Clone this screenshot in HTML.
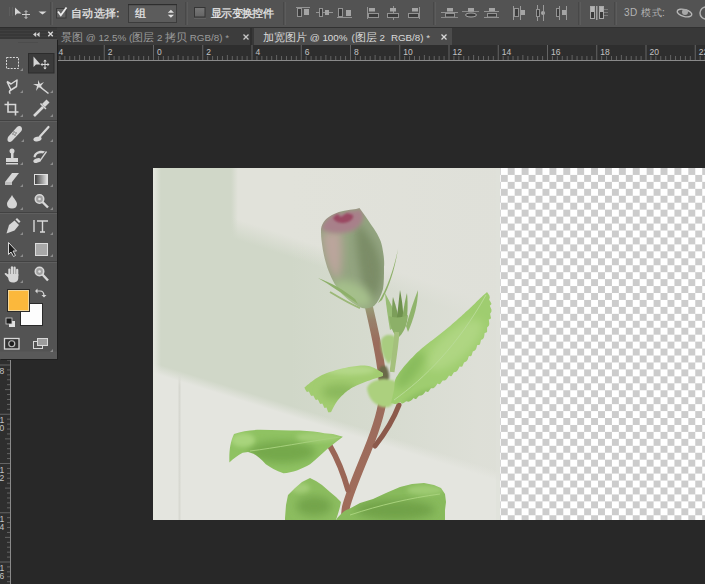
<!DOCTYPE html>
<html><head><meta charset="utf-8">
<style>
*{margin:0;padding:0;box-sizing:border-box}
html,body{width:705px;height:584px;overflow:hidden;background:#282828;font-family:"Liberation Sans",sans-serif;position:relative}
.abs{position:absolute}
#opt{left:0;top:0;width:705px;height:28px;background:#535353;border-bottom:1px solid #333}
.txt{font-size:11px;line-height:14px;color:#e8e8e8;white-space:nowrap;-webkit-text-stroke:0.25px #e8e8e8}
#tabs{left:57px;top:27px;width:648px;height:18px;background:#383838;border-top:1px solid #313131}
#tab1{left:0;top:0;width:195px;height:17px;background:#3c3c3c;color:#9c9c9c;font-size:10.5px;line-height:12px;white-space:nowrap;overflow:hidden;border-right:2px solid #2f2f2f}
.x{font-size:12px}
#tabs span{font-size:9.8px}
#tabs b.c{font-weight:normal;font-size:11px}
#tab2{left:197px;top:0;width:198px;height:17px;background:#4c4c4c;color:#dadada;font-size:10.5px;line-height:12px;white-space:nowrap;overflow:hidden}
#hruler{left:57px;top:45px;width:648px;height:16px;background:#2e2e2e}
#vruler{left:0;top:45px;width:11px;height:539px;background:#2e2e2e}
#panelhdr{left:0;top:27px;width:57px;height:12px;background:#383838}
#panel{left:0;top:39px;width:57px;height:320px;background:linear-gradient(#535353 0,#535353 312px,#595959 313px,#595959 100%);box-shadow:1px 1px 0 #1f1f1f}
#photo{left:153px;top:168px;width:347px;height:352px;background:#dfe1d9;overflow:hidden}
#checker{left:500px;top:168px;width:205px;height:352px;
 background-color:#fff;
 background-image:conic-gradient(#cccccc 0 25%,#fff 0 50%,#cccccc 0 75%,#fff 0);
 background-size:13.9px 13.9px;background-position:0.8px 0}
</style></head><body>
<div id="opt" class="abs">
 <svg class="abs" style="left:0;top:0" width="705" height="27">
  <g stroke="#484848" stroke-width="1"><line x1="50.5" y1="2" x2="50.5" y2="25"/><line x1="185.5" y1="2" x2="185.5" y2="25"/><line x1="283.5" y1="2" x2="283.5" y2="25"/><line x1="433.5" y1="2" x2="433.5" y2="25"/><line x1="578.5" y1="2" x2="578.5" y2="25"/><line x1="614.5" y1="2" x2="614.5" y2="25"/></g>
  <g stroke="#5c5c5c" stroke-width="1"><line x1="52.5" y1="2" x2="52.5" y2="25"/><line x1="187.5" y1="2" x2="187.5" y2="25"/><line x1="285.5" y1="2" x2="285.5" y2="25"/><line x1="435.5" y1="2" x2="435.5" y2="25"/><line x1="580.5" y1="2" x2="580.5" y2="25"/><line x1="616.5" y1="2" x2="616.5" y2="25"/></g>
  <path d="M9.5,7 V16 M12.5,7 V16" stroke="#5e5e5e" stroke-width="1"/>
  <!-- move icon -->
  <path d="M15,7.5 L15,15.5 L17,13.5 L21.5,13.5 Z" fill="#d4d4d4"/>
  <path d="M26,11 V18.5 M22,14.5 H30" stroke="#cfcfcf" stroke-width="1"/>
  <path d="M24.5,12 L26,10.5 L27.5,12 M24.5,17 L26,18.5 L27.5,17" stroke="#cfcfcf" stroke-width="0.8" fill="none"/>
  <path d="M38.5,11.5 H46.5 L42.5,14.5 Z" fill="#d8d8d8"/>
  <!-- checkbox 1 -->
  <rect x="56.5" y="8.5" width="9.5" height="9.5" fill="#626262" stroke="#3a3a3a"/>
  <path d="M58,11.5 L60.8,15.2 L66.5,7.5" stroke="#ececec" stroke-width="1.8" fill="none"/>
  <!-- dropdown -->
  <rect x="128.5" y="4.5" width="48" height="18" fill="#5c5c5c" stroke="#3c3c3c"/><rect x="128" y="4" width="49" height="1.2" fill="#2e2e2e"/>
  <path d="M167.8,12.8 L170.9,9.8 L174,12.8 Z M167.8,14.8 L170.9,17.8 L174,14.8 Z" fill="#e0e0e0"/>
  <!-- checkbox 2 -->
  <defs><linearGradient id="cbg" x1="0" y1="0" x2="0" y2="1"><stop offset="0" stop-color="#787878"/><stop offset="1" stop-color="#646464"/></linearGradient></defs><rect x="194.5" y="7.5" width="10.5" height="9.5" fill="url(#cbg)" stroke="#353535"/><rect x="194" y="18" width="12" height="1" fill="#626262"/>
  <g id="aligns"><path d="M296,7.5 L310,7.5" stroke="#939393" stroke-width="1"/><rect x="297.5" y="8.5" width="4" height="8" fill="#3c3c3c" stroke="#939393" stroke-width="1"/><rect x="304" y="9" width="5" height="6" fill="#a4a4a4"/><path d="M316,12.5 L333,12.5" stroke="#939393" stroke-width="1"/><rect x="319.5" y="8.5" width="3" height="8" fill="#3c3c3c" stroke="#939393" stroke-width="1"/><rect x="325" y="10" width="4" height="5" fill="#a4a4a4"/><path d="M337,17.5 L352,17.5" stroke="#939393" stroke-width="1"/><rect x="338.5" y="8.5" width="4" height="8" fill="#3c3c3c" stroke="#939393" stroke-width="1"/><rect x="346" y="10" width="5" height="6" fill="#a4a4a4"/><path d="M367.5,7 L367.5,19" stroke="#939393" stroke-width="1"/><rect x="369" y="8" width="6" height="3.5" fill="#a4a4a4"/><rect x="368.5" y="13.5" width="10" height="4" fill="#3c3c3c" stroke="#939393" stroke-width="1"/><path d="M393.5,6 L393.5,20" stroke="#939393" stroke-width="1"/><rect x="390" y="8" width="6" height="3.5" fill="#a4a4a4"/><rect x="387.5" y="13.5" width="11" height="4" fill="#3c3c3c" stroke="#939393" stroke-width="1"/><path d="M419.5,7 L419.5,19" stroke="#939393" stroke-width="1"/><rect x="412" y="8" width="6" height="3.5" fill="#a4a4a4"/><rect x="408.5" y="13.5" width="10" height="4" fill="#3c3c3c" stroke="#939393" stroke-width="1"/><path d="M441,12.5 L458,12.5" stroke="#939393" stroke-width="1"/><rect x="447" y="8" width="6" height="3.5" fill="#a4a4a4"/><rect x="445.5" y="13.5" width="9" height="3.5" fill="#3c3c3c" stroke="#939393" stroke-width="1"/><path d="M441,17.5 L458,17.5" stroke="#8a8a8a" stroke-width="1"/><path d="M462,11.5 L479,11.5" stroke="#8a8a8a" stroke-width="1"/><rect x="468" y="8" width="6" height="3.5" fill="#a4a4a4"/><ellipse cx="471" cy="15" rx="5.5" ry="2" fill="#3c3c3c" stroke="#a8a8a8"/><path d="M484,11.5 L499,11.5" stroke="#939393" stroke-width="1"/><rect x="489" y="8" width="6" height="3" fill="#a4a4a4"/><rect x="487.5" y="13.5" width="9" height="3.5" fill="#3c3c3c" stroke="#939393" stroke-width="1"/><path d="M484,17.5 L499,17.5" stroke="#939393" stroke-width="1"/><path d="M513.5,6 L513.5,20" stroke="#9a9a9a" stroke-width="1"/><rect x="514.5" y="8.5" width="4" height="8" fill="#3c3c3c" stroke="#939393" stroke-width="1"/><rect x="521" y="10" width="4" height="5" fill="#a4a4a4"/><path d="M520.5,6 L520.5,20" stroke="#9a9a9a" stroke-width="1"/><path d="M537.5,5 L537.5,21" stroke="#9a9a9a" stroke-width="1"/><rect x="536.5" y="9.5" width="3" height="7" fill="#3c3c3c" stroke="#939393" stroke-width="1"/><circle cx="543" cy="13" r="2" fill="#a8a8a8"/><path d="M543.5,5 L543.5,21" stroke="#9a9a9a" stroke-width="1"/><path d="M559.5,6 L559.5,20" stroke="#9a9a9a" stroke-width="1"/><rect x="556.5" y="8.5" width="3" height="8" fill="#3c3c3c" stroke="#939393" stroke-width="1"/><rect x="562" y="10" width="4" height="5" fill="#a4a4a4"/><path d="M566.5,6 L566.5,20" stroke="#9a9a9a" stroke-width="1"/>
   <rect x="590.5" y="6.5" width="4" height="12" fill="#3a3a3a" stroke="#a8a8a8"/><rect x="591" y="7" width="3" height="5" fill="#b4b4b4"/><rect x="596" y="6" width="1.5" height="14" fill="#a0a0a0"/><rect x="599.5" y="6.5" width="4" height="12" fill="#3a3a3a" stroke="#a8a8a8"/><rect x="600" y="7" width="3" height="5" fill="#b4b4b4"/><path d="M604,9.5 H608 M604,12.5 H608 M604,15.5 H608" stroke="#7a7a7a"/>
  </g>
  <!-- 3d orbit -->
  <ellipse cx="684.5" cy="13" rx="7.5" ry="3.5" fill="none" stroke="#b8b8b8" stroke-width="1.4" transform="rotate(15 684.5 13)"/>
  <circle cx="685" cy="12" r="3" fill="#a8a8a8"/>
  <circle cx="706" cy="13" r="6" fill="none" stroke="#b0b0b0" stroke-width="1.5"/>
 </svg>
 <div class="abs txt" style="left:71px;top:6px;letter-spacing:0.3px">自动选择:</div>
 <div class="abs txt" style="left:135px;top:6px">组</div>
 <div class="abs txt" style="left:211px;top:6px;letter-spacing:-0.7px">显示变换控件</div>
 <div class="abs" style="left:624px;top:6px;font-size:10px;line-height:14px;color:#b4b4b4;white-space:nowrap;letter-spacing:0.5px">3D 模式:</div>
</div>
<div id="tabs" class="abs">
  <div id="tab1" class="abs"><span class="abs" style="left:4px;top:3px"><b class="c">景图</b> @ 12.5% (<b class="c">图层</b> 2 <b class="c">拷贝</b> RGB/8) *</span><svg class="abs" style="left:185px;top:5px" width="8" height="8"><path d="M1.5,1.5 L6.5,6.5 M6.5,1.5 L1.5,6.5" stroke="#c8c8c8" stroke-width="1.3"/></svg></div>
  <div id="tab2" class="abs"><span class="abs" style="left:9px;top:3px"><b class="c">加宽图片</b> @ 100%<i style="font-style:normal;margin-left:4px">(</i><b class="c">图层</b> 2<i style="font-style:normal;margin-left:6px">RGB/8)</i> *</span><svg class="abs" style="left:186px;top:5px" width="8" height="8"><path d="M1.5,1.5 L6.5,6.5 M6.5,1.5 L1.5,6.5" stroke="#d8d8d8" stroke-width="1.3"/></svg></div>
</div>
<div id="hruler" class="abs"><svg width="648" height="16" style="position:absolute;left:0;top:0">
<path d="M2.92,11V15M7.85,11V15M12.78,11V15M17.70,11V15M22.62,10V15M27.55,11V15M32.48,11V15M37.40,11V15M42.33,11V15M47.25,0V15M52.18,11V15M57.10,11V15M62.03,11V15M66.95,11V15M71.88,10V15M76.80,11V15M81.72,11V15M86.65,11V15M91.57,11V15M96.50,0V15M101.43,11V15M106.35,11V15M111.28,11V15M116.20,11V15M121.12,10V15M126.05,11V15M130.97,11V15M135.90,11V15M140.82,11V15M145.75,0V15M150.68,11V15M155.60,11V15M160.52,11V15M165.45,11V15M170.38,10V15M175.30,11V15M180.22,11V15M185.15,11V15M190.07,11V15M195.00,0V15M199.93,11V15M204.85,11V15M209.77,11V15M214.70,11V15M219.62,10V15M224.55,11V15M229.48,11V15M234.40,11V15M239.32,11V15M244.25,0V15M249.17,11V15M254.10,11V15M259.02,11V15M263.95,11V15M268.88,10V15M273.80,11V15M278.73,11V15M283.65,11V15M288.57,11V15M293.50,0V15M298.42,11V15M303.35,11V15M308.27,11V15M313.20,11V15M318.12,10V15M323.05,11V15M327.98,11V15M332.90,11V15M337.82,11V15M342.75,0V15M347.67,11V15M352.60,11V15M357.52,11V15M362.45,11V15M367.38,10V15M372.30,11V15M377.22,11V15M382.15,11V15M387.07,11V15M392.00,0V15M396.93,11V15M401.85,11V15M406.77,11V15M411.70,11V15M416.62,10V15M421.55,11V15M426.47,11V15M431.40,11V15M436.32,11V15M441.25,0V15M446.18,11V15M451.10,11V15M456.02,11V15M460.95,11V15M465.88,10V15M470.80,11V15M475.72,11V15M480.65,11V15M485.58,11V15M490.50,0V15M495.42,11V15M500.35,11V15M505.27,11V15M510.20,11V15M515.12,10V15M520.05,11V15M524.97,11V15M529.90,11V15M534.83,11V15M539.75,0V15M544.67,11V15M549.60,11V15M554.52,11V15M559.45,11V15M564.38,10V15M569.30,11V15M574.22,11V15M579.15,11V15M584.08,11V15M589.00,0V15M593.92,11V15M598.85,11V15M603.77,11V15M608.70,11V15M613.62,10V15M618.55,11V15M623.48,11V15M628.40,11V15M633.32,11V15M638.25,0V15M643.17,11V15M648.10,11V15" stroke="#646464" stroke-width="1" fill="none"/>
<rect x="0" y="15" width="648" height="1" fill="#8a8a8a"/>
<g font-family="Liberation Sans" font-size="8.5" fill="#c4c4c4"><text x="1.50" y="10.3">4</text><text x="50.75" y="10.3">2</text><text x="100.00" y="10.3">0</text><text x="149.25" y="10.3">2</text><text x="198.50" y="10.3">4</text><text x="247.75" y="10.3">6</text><text x="297.00" y="10.3">8</text><text x="346.25" y="10.3">10</text><text x="395.50" y="10.3">12</text><text x="444.75" y="10.3">14</text><text x="494.00" y="10.3">16</text><text x="543.25" y="10.3">18</text><text x="592.50" y="10.3">20</text><text x="641.75" y="10.3">22</text></g></svg></div>
<div id="vruler" class="abs"><svg width="11" height="539" style="position:absolute;left:0;top:0">
<path d="M0,-24.75H10M7,-19.82H10M7,-14.90H10M7,-9.97H10M7,-5.05H10M5,-0.12H10M7,4.80H10M7,9.73H10M7,14.65H10M7,19.58H10M0,24.50H10M7,29.42H10M7,34.35H10M7,39.28H10M7,44.20H10M5,49.12H10M7,54.05H10M7,58.98H10M7,63.90H10M7,68.83H10M0,73.75H10M7,78.68H10M7,83.60H10M7,88.53H10M7,93.45H10M5,98.38H10M7,103.30H10M7,108.22H10M7,113.15H10M7,118.07H10M0,123.00H10M7,127.93H10M7,132.85H10M7,137.78H10M7,142.70H10M5,147.62H10M7,152.55H10M7,157.47H10M7,162.40H10M7,167.32H10M0,172.25H10M7,177.18H10M7,182.10H10M7,187.02H10M7,191.95H10M5,196.88H10M7,201.80H10M7,206.72H10M7,211.65H10M7,216.57H10M0,221.50H10M7,226.43H10M7,231.35H10M7,236.27H10M7,241.20H10M5,246.12H10M7,251.05H10M7,255.98H10M7,260.90H10M7,265.82H10M0,270.75H10M7,275.67H10M7,280.60H10M7,285.52H10M7,290.45H10M5,295.38H10M7,300.30H10M7,305.23H10M7,310.15H10M7,315.07H10M0,320.00H10M7,324.92H10M7,329.85H10M7,334.77H10M7,339.70H10M5,344.62H10M7,349.55H10M7,354.48H10M7,359.40H10M7,364.32H10M0,369.25H10M7,374.17H10M7,379.10H10M7,384.02H10M7,388.95H10M5,393.88H10M7,398.80H10M7,403.72H10M7,408.65H10M7,413.57H10M0,418.50H10M7,423.43H10M7,428.35H10M7,433.27H10M7,438.20H10M5,443.12H10M7,448.05H10M7,452.97H10M7,457.90H10M7,462.82H10M0,467.75H10M7,472.67H10M7,477.60H10M7,482.52H10M7,487.45H10M5,492.38H10M7,497.30H10M7,502.22H10M7,507.15H10M7,512.08H10M0,517.00H10M7,521.92H10M7,526.85H10M7,531.77H10M7,536.70H10" stroke="#646464" stroke-width="1" fill="none"/>
<rect x="10" y="0" width="1" height="539" fill="#8a8a8a"/>
<g font-family="Liberation Sans" font-size="8.5" fill="#c4c4c4"><text x="-0.5" y="-15.75">6</text><text x="-0.5" y="33.50">4</text><text x="-0.5" y="82.75">2</text><text x="-0.5" y="132.00">0</text><text x="-0.5" y="181.25">2</text><text x="-0.5" y="230.50">4</text><text x="-0.5" y="279.75">6</text><text x="-0.5" y="329.00">8</text><text x="-0.5" y="378.25">1</text><text x="-0.5" y="386.25">0</text><text x="-0.5" y="427.50">1</text><text x="-0.5" y="435.50">2</text><text x="-0.5" y="476.75">1</text><text x="-0.5" y="484.75">4</text><text x="-0.5" y="526.00">1</text><text x="-0.5" y="534.00">6</text></g></svg></div>
<div id="panelhdr" class="abs"><svg width="57" height="12" style="position:absolute;left:0;top:0">
 <rect x="0" y="0" width="57" height="1" fill="#2e2e2e"/>
 <rect x="0" y="3" width="57" height="1" fill="#3f3f3f"/><rect x="0" y="6" width="57" height="1" fill="#3f3f3f"/><rect x="0" y="9" width="57" height="1" fill="#3f3f3f"/>
 <path d="M36.2,5 L33,7.5 L36.2,10 Z M39.6,5 L36.4,7.5 L39.6,10 Z" fill="#d0d0d0"/>
 <path d="M48.3,4.8 L52.8,9.3 M52.8,4.8 L48.3,9.3" stroke="#d8d8d8" stroke-width="1.4"/>
</svg></div>
<div id="panel" class="abs"><svg width="57" height="320" viewBox="0 39 57 320" style="position:absolute;left:0;top:0">
 <rect x="18" y="42" width="20" height="1" fill="#4c4c4c"/>
 <!-- separators -->
 <rect x="0" y="120" width="57" height="1" fill="#424242"/><rect x="0" y="121" width="57" height="1" fill="#5f5f5f"/>
 <rect x="0" y="212" width="57" height="1" fill="#424242"/><rect x="0" y="213" width="57" height="1" fill="#5f5f5f"/>
 <rect x="0" y="261" width="57" height="1" fill="#424242"/><rect x="0" y="262" width="57" height="1" fill="#5f5f5f"/>
 <!-- selected move tool -->
 <rect x="28.5" y="53.5" width="25.5" height="19.5" fill="#3b3b3b" stroke="#2c2c2c"/>
 <g fill="none" stroke="#d8d8d8" stroke-width="1">
  <!-- marquee -->
  <rect x="6.5" y="57.5" width="12" height="11" stroke-dasharray="2 1.2"/>
  <!-- lasso -->
  <path d="M7,81.5 L11,84 L17,80 L16.5,86.5 L11,90 L7,81.5 M11,90 C9,91 9,93 10.5,93.5" stroke-width="1.5" stroke-linejoin="round"/>
  <!-- crop -->
  <path d="M8,101.5 V112 H18.5 M4.5,104.5 H15.5 V115.5" stroke-width="1.6"/>
  <!-- eyedropper -->
  <path d="M34,116 L43,107" stroke-width="2.6"/>
  <!-- brush handle -->
  <path d="M48.5,127 L40,136.5" stroke-width="2.2" stroke-linecap="round"/>
  <!-- type -->
  <path d="M37,221 H48 M42.5,221 V232 M40,232 H45 M34,220 V232" stroke-width="1.4"/>
  <!-- hand -->
  <!-- zoom -->
  <circle cx="39.5" cy="271.5" r="4.2" stroke-width="1.6" fill="#a0a0a0"/><circle cx="39.5" cy="271.5" r="1.3" fill="#e0e0e0" stroke="none"/>
  <path d="M42.5,274.5 L48,280.5" stroke-width="2.4"/>
  <circle cx="39.5" cy="199" r="4.2" stroke-width="1.6" fill="#a0a0a0"/><circle cx="39.5" cy="199" r="1.3" fill="#e0e0e0" stroke="none"/>
  <path d="M42.5,202 L48,207.5" stroke-width="2.4"/>
  <!-- swap -->
  <path d="M36,291 H40 C43,291 44,293 44,296" stroke-width="1.2"/>
  <!-- quick mask -->
  <rect x="4.5" y="338.5" width="14.5" height="10.5" stroke-width="1.3" fill="#333"/>
  <!-- screen mode -->
  <rect x="33.5" y="341.5" width="9" height="7" stroke-width="1"/>
 </g>
 <g fill="#d6d6d6">
  <!-- move arrow -->
  <path d="M33.5,56.5 L33.5,67 L36,64.5 L40.5,64.5 Z"/>
  <path d="M44.5,60 H45.5 V69 H44.5 Z M41,64 H49 V65 H41 Z"/>
  <path d="M43.2,61.5 L45,59.5 L46.8,61.5 Z M43.2,67.5 L45,69.5 L46.8,67.5 Z M42.5,62.7 L40.5,64.5 L42.5,66.3 Z M47.5,62.7 L49.5,64.5 L47.5,66.3 Z"/>
  <!-- magic wand -->
  <path d="M38,80 L40,84 L44,82 L41,86 L44,90 L39,87 L36,91 L37,86 L33,84 L38,84 Z"/>
  <path d="M40,86 L49,93 L48,94 L39,87 Z"/>
  <!-- crop center -->
  <rect x="10" y="106" width="3" height="3" fill="#5a5a5a"/>
  <!-- eyedropper tip -->
  <path d="M42,104 L46.5,99.5 L49.5,102.5 L45,107 Z"/><path d="M40.5,103.5 L46,109" stroke="#d6d6d6" stroke-width="1.5"/>
  <!-- healing -->
  <path d="M8,137 L17,127 C19,125 22,126 22,129 C22,130 21.5,131 21,131.5 L12,141 C10,143 7,142 7.5,139 Z"/><g fill="#6a6a6a"><circle cx="13" cy="134" r="0.8"/><circle cx="15" cy="135" r="0.8"/><circle cx="14" cy="132" r="0.8"/><circle cx="16" cy="133" r="0.8"/></g>
  <!-- brush tip -->
  <ellipse cx="37.5" cy="139" rx="4.2" ry="2.3" transform="rotate(-15 37.5 139)"/>
  <!-- stamp -->
  <circle cx="12" cy="151" r="2.5"/>
  <rect x="11" y="152" width="2.5" height="6"/>
  <path d="M6,158 H18 V162 H6 Z"/>
  <rect x="6" y="163" width="12" height="1.5"/>
  <!-- history brush -->
  <path d="M33.5,157 C34,152 40,149.5 45,151.5 L43,153.5 C39.5,152.5 36,154 35.5,157.5 Z"/><ellipse cx="37" cy="160.5" rx="3.8" ry="2.2" transform="rotate(-20 37 160.5)"/>
  <path d="M47,152 L40,162 L39,161 L46,151 Z"/>
  <!-- eraser -->
  <path d="M5,182 L12,173 H19 L12,182 Z"/>
  <path d="M5,182 H12 V185 H5 Z" fill="#bdbdbd"/>
  <!-- blur drop -->
  <path d="M12,195 C14,199 17,201 17,204 C17,207 15,208.5 12,208.5 C9,208.5 7,207 7,204 C7,201 10,199 12,195 Z"/>
  <!-- pen -->
  <path d="M6.5,233.5 L9,225 L14.5,220.5 L19,225 L14.5,230.5 Z"/><path d="M15.5,219.5 L17,218 L20.5,221.5 L19,223 Z"/>
  <!-- path select -->
  <!-- hand -->
  <rect x="8.3" y="268.5" width="2.2" height="8" rx="1.1"/><rect x="10.9" y="266.2" width="2.2" height="9" rx="1.1"/><rect x="13.5" y="266.6" width="2.2" height="9" rx="1.1"/><rect x="16.1" y="268.8" width="2.2" height="8" rx="1.1"/>
  <path d="M8.3,274 H18.3 V278 C18.3,281 16,282.5 13,282.5 C10,282.5 8.3,281 8.3,278 Z"/>
  <path d="M9,278.5 L5,274.5 C4.2,273.7 4.8,272.6 6,273 L9.5,275.5 Z"/>
  <!-- swap heads -->
  <path d="M35,291 L37.5,288.5 V293.5 Z M44,297.5 L41.5,295 H46.5 Z"/>
  <!-- screen mode -->
  <rect x="37.5" y="338.5" width="10" height="7" fill="#9c9c9c" stroke="#d8d8d8" stroke-width="1"/>
 </g>
 <defs><linearGradient id="gtool" x1="0" y1="0" x2="1" y2="0"><stop offset="0" stop-color="#3a3a3a"/><stop offset="1" stop-color="#e6e6e6"/></linearGradient></defs><rect x="34.5" y="174.5" width="13" height="10" fill="url(#gtool)" stroke="#e0e0e0"/>
 <rect x="35.5" y="243.5" width="12" height="12" fill="#a8a8a8" stroke="#dcdcdc"/>
 <path d="M8.5,242.5 L8.5,254.5 L11,252 L13.5,256.5 L15.5,255.5 L13,251 L16.5,251 Z" fill="#1e1e1e" stroke="#d8d8d8" stroke-width="1"/>
 <circle cx="11.75" cy="343.75" r="3" fill="#1e1e1e" stroke="#bdbdbd" stroke-width="1.2"/>
 <!-- small triangles -->
 <g fill="#8c8c8c">
  <path d="M20,71 L23,71 L23,68 Z M50,93 L53,93 L53,90 Z M20,93 L23,93 L23,90 Z M20,117 L23,117 L23,114 Z M50,117 L53,117 L53,114 Z M21,142 L24,142 L24,139 Z M50,142 L53,142 L53,139 Z M20,165 L23,165 L23,162 Z M50,165 L53,165 L53,162 Z M20,187 L23,187 L23,184 Z M50,187 L53,187 L53,184 Z M20,210 L23,210 L23,207 Z M50,210 L53,210 L53,207 Z M20,235 L23,235 L23,232 Z M50,235 L53,235 L53,232 Z M20,257 L23,257 L23,254 Z M50,257 L53,257 L53,254 Z M20,283 L23,283 L23,280 Z M50,352 L53,352 L53,349 Z"/>
 </g>
 <!-- colors -->
 <rect x="20.5" y="303.5" width="22" height="22" fill="#fdfdfd" stroke="#2a2a2a"/>
 <rect x="7.5" y="289.5" width="22" height="22" fill="#fbb83c" stroke="#2a2a2a"/>
 <rect x="8.5" y="290.5" width="20" height="20" fill="none" stroke="#f3d79a" stroke-width="1"/>
 <rect x="9" y="321" width="6" height="6" fill="#e0e0e0"/>
 <rect x="6" y="318" width="6" height="6" fill="#1e1e1e" stroke="#d0d0d0" stroke-width="0.8"/>
</svg></div>

<div id="photo" class="abs"><svg id="photosvg" width="347" height="352" viewBox="153 168 347 352" style="position:absolute;left:0;top:0">
 <defs>
  <filter id="b8" x="-30%" y="-30%" width="160%" height="160%"><feGaussianBlur stdDeviation="8"/></filter>
  <filter id="b4" x="-30%" y="-30%" width="160%" height="160%"><feGaussianBlur stdDeviation="4"/></filter>
  <filter id="b2" x="-30%" y="-30%" width="160%" height="160%"><feGaussianBlur stdDeviation="2"/></filter>
  <filter id="b1" x="-30%" y="-30%" width="160%" height="160%"><feGaussianBlur stdDeviation="0.8"/></filter>
  <filter id="b05" x="-30%" y="-30%" width="160%" height="160%"><feGaussianBlur stdDeviation="0.5"/></filter>
  <linearGradient id="leafR" x1="0" y1="1" x2="1" y2="0">
   <stop offset="0" stop-color="#86b85a"/><stop offset="0.5" stop-color="#9acb6a"/><stop offset="1" stop-color="#a4d074"/>
  </linearGradient>
  <linearGradient id="tlg" gradientUnits="userSpaceOnUse" x1="231" y1="0" x2="238" y2="0"><stop offset="0" stop-color="#d0d7c8"/><stop offset="1" stop-color="#d0d7c8" stop-opacity="0"/></linearGradient>
  <linearGradient id="bandg" gradientUnits="userSpaceOnUse" x1="370.6" y1="262.5" x2="364.4" y2="281.5"><stop offset="0" stop-color="#d0d7c8" stop-opacity="0"/><stop offset="1" stop-color="#d0d7c8"/></linearGradient>
  <linearGradient id="fadeg" gradientUnits="userSpaceOnUse" x1="290" y1="0" x2="480" y2="0"><stop offset="0" stop-color="#dfe0d9" stop-opacity="0"/><stop offset="1" stop-color="#dfe0d9" stop-opacity="0.9"/></linearGradient>
  <linearGradient id="whiteg" gradientUnits="userSpaceOnUse" x1="328.0" y1="417.2" x2="325.0" y2="426.8"><stop offset="0" stop-color="#e4e5df" stop-opacity="0"/><stop offset="1" stop-color="#e4e5df"/></linearGradient>
  <linearGradient id="vlineg" x1="0" y1="0" x2="0" y2="1"><stop offset="0" stop-color="#d6d7d0" stop-opacity="0"/><stop offset="0.1" stop-color="#d6d7d0"/><stop offset="1" stop-color="#d8d9d2"/></linearGradient>
  <linearGradient id="leftg" x1="0" y1="0" x2="1" y2="0"><stop offset="0" stop-color="#e6e8e0"/><stop offset="1" stop-color="#e6e8e0" stop-opacity="0"/></linearGradient>
  <linearGradient id="midg" x1="0" y1="0" x2="1" y2="0">
   <stop offset="0" stop-color="#cfd6c8"/><stop offset="0.55" stop-color="#d4d9cd"/><stop offset="1" stop-color="#dcded6"/>
  </linearGradient>
  <linearGradient id="stemg" x1="0" y1="0" x2="0" y2="1">
   <stop offset="0" stop-color="#98a478"/><stop offset="0.08" stop-color="#98806a"/><stop offset="0.18" stop-color="#9a6c5c"/><stop offset="1" stop-color="#a06c5a"/>
  </linearGradient>
 </defs>
 <rect x="153" y="168" width="347" height="352" fill="#e1e2da"/>
 <rect x="153" y="168" width="90" height="120" fill="url(#tlg)"/>
 <rect x="153" y="168" width="347" height="352" fill="url(#bandg)"/>
 <rect x="153" y="168" width="347" height="352" fill="url(#fadeg)"/>
 <rect x="153" y="168" width="347" height="352" fill="url(#whiteg)"/>
 <rect x="178.5" y="372" width="2" height="148" fill="url(#vlineg)"/>
 <rect x="153" y="168" width="8" height="352" fill="url(#leftg)"/>
 <rect x="496" y="168" width="4" height="352" fill="#e0e1da" opacity="0.6"/>
 <!-- stems -->
 <g filter="url(#b05)">
  <path d="M368,303 C372,320 378,345 381,367 C383,380 384,390 383,398 C381,415 372,440 363,461 C356,478 349,495 346,507 C345,512 345,518 345,522" stroke="url(#stemg)" stroke-width="8" fill="none"/>
  <path d="M399,405 C394,418 386,432 375,446" stroke="#8c5a4c" stroke-width="5" fill="none" stroke-linecap="round"/>
  <path d="M330,446 C337,458 343,472 348,490" stroke="#9a6656" stroke-width="5.5" fill="none" stroke-linecap="round"/>
  
 </g>
 <path d="M381,366 C376,372 378,382 384,386 C390,382 391,374 386,366 Z" fill="#6b6a48" filter="url(#b1)"/>
 <!-- blob behind stem -->
 <path d="M367,388 C370,380 384,376 396,382 C399,392 396,403 389,407 C378,409 368,400 367,388 Z" fill="#acd07e" filter="url(#b1)"/>
 <!-- left middle leaf -->
 <clipPath id="cpLM"><path d="M383.0,373.0 L381.3,372.0 L379.6,370.9 L377.9,369.9 L376.1,368.9 L374.4,368.0 L372.5,367.2 L370.6,366.6 L368.7,366.1 L366.7,365.7 L364.7,365.5 L362.7,365.5 L360.7,365.6 L358.7,365.7 L356.7,365.9 L354.8,366.2 L352.8,366.5 L350.8,366.8 L348.8,367.1 L346.9,367.5 L344.9,367.9 L343.0,368.3 L341.0,368.8 L339.1,369.2 L337.1,369.8 L335.2,370.3 L333.3,370.9 L331.4,371.5 L329.5,372.1 L327.6,372.7 L325.7,373.5 L323.9,374.2 L322.0,375.0 L320.2,375.9 L318.5,376.9 L316.8,377.9 L315.1,379.0 L313.5,380.2 L311.9,381.4 L310.3,382.6 L308.8,383.9 L307.2,385.1 L305.7,386.4 L304.4,387.4 L304.4,387.4 L305.3,389.4 L306.3,391.3 L307.0,392.0 L308.9,391.4 L309.8,393.4 L310.7,395.3 L311.5,396.0 L313.3,395.4 L314.3,397.4 L315.2,399.3 L316.0,400.0 L317.9,399.4 L318.8,401.3 L319.7,403.2 L320.5,403.9 L322.3,403.4 L323.2,405.3 L324.0,407.3 L324.6,408.1 L326.5,407.6 L327.3,409.7 L328.0,411.7 L328.7,412.4 L330.6,412.1 L330.9,412.4 L330.9,412.4 L331.8,410.6 L332.7,408.8 L333.6,407.1 L334.6,405.3 L335.6,403.6 L336.6,401.9 L337.8,400.3 L339.1,398.7 L340.4,397.2 L341.8,395.8 L343.3,394.4 L344.7,393.1 L346.3,391.8 L347.8,390.5 L349.5,389.4 L351.1,388.3 L352.9,387.3 L354.6,386.4 L356.5,385.5 L358.3,384.7 L360.1,383.9 L362.0,383.2 L363.8,382.5 L365.7,381.7 L367.6,381.0 L369.5,380.4 L371.4,379.7 L373.3,379.1 L375.2,378.5 L377.1,377.9 L379.0,377.3 L380.9,376.7 L382.8,376.1 L383.0,376.0 Z"/></clipPath>
 <g clip-path="url(#cpLM)" filter="url(#b05)">
  <rect x="300" y="360" width="90" height="60" fill="#a2cc70"/>
  <ellipse cx="340" cy="392" rx="18" ry="8" fill="#8ab85c" filter="url(#b4)"/>
  <ellipse cx="350" cy="370" rx="25" ry="5" fill="#b4d888" filter="url(#b2)"/>
 </g>
 <!-- big right leaf -->
 <clipPath id="cpBR"><path d="M391.0,403.0 L391.5,401.1 L391.9,399.1 L392.4,397.2 L392.8,395.2 L393.3,393.3 L393.7,391.3 L394.1,389.3 L394.3,387.4 L394.4,385.4 L394.5,383.4 L394.8,381.4 L395.3,379.5 L396.1,377.6 L397.1,375.9 L398.2,374.2 L399.3,372.6 L400.5,371.0 L401.7,369.4 L403.0,367.8 L404.2,366.3 L405.5,364.8 L406.9,363.3 L408.2,361.8 L409.5,360.3 L410.9,358.8 L412.3,357.4 L413.7,355.9 L415.1,354.5 L416.5,353.1 L418.0,351.8 L419.5,350.4 L421.0,349.1 L422.5,347.8 L424.1,346.6 L425.6,345.3 L427.2,344.1 L428.8,342.8 L430.3,341.6 L431.9,340.4 L433.5,339.2 L435.1,338.0 L436.7,336.7 L438.3,335.5 L439.9,334.3 L441.4,333.1 L443.0,331.8 L444.6,330.6 L446.1,329.3 L447.6,328.0 L449.2,326.7 L450.7,325.4 L452.2,324.1 L453.7,322.8 L455.2,321.5 L456.7,320.2 L458.2,318.8 L459.7,317.5 L461.2,316.2 L462.7,314.8 L464.2,313.5 L465.6,312.1 L467.1,310.8 L468.6,309.4 L470.1,308.1 L471.5,306.7 L473.0,305.3 L474.4,303.9 L475.8,302.5 L477.2,301.1 L478.6,299.7 L480.1,298.3 L481.5,296.9 L483.0,295.6 L484.5,294.2 L486.0,292.9 L487.0,292.0 L487.0,292.0 L488.2,293.8 L489.4,295.5 L489.8,297.5 L489.2,299.7 L490.3,301.5 L491.4,303.4 L491.2,304.5 L489.8,305.7 L490.7,307.7 L491.5,309.7 L491.4,311.8 L490.1,313.7 L490.5,315.8 L491.0,317.9 L490.4,318.9 L488.8,319.6 L489.1,321.7 L489.3,323.9 L488.8,325.8 L487.1,327.5 L487.1,329.6 L487.1,331.8 L486.4,332.6 L484.6,332.9 L484.4,335.1 L484.0,337.2 L483.0,339.0 L481.0,340.1 L480.5,342.2 L480.0,344.3 L479.1,344.9 L477.3,344.9 L476.7,346.9 L476.1,349.0 L474.9,350.6 L472.8,351.5 L472.2,353.6 L471.6,355.6 L470.7,356.2 L468.9,356.0 L468.2,358.1 L467.5,360.1 L466.2,361.6 L464.0,362.4 L463.2,364.4 L462.3,366.4 L461.3,366.8 L459.6,366.5 L458.6,368.4 L457.7,370.3 L456.2,371.7 L453.9,372.2 L452.8,374.0 L451.7,375.9 L450.7,376.2 L449.0,375.6 L447.8,377.4 L446.6,379.2 L445.0,380.4 L442.7,380.6 L441.4,382.3 L440.2,384.1 L439.2,384.3 L437.5,383.6 L436.2,385.4 L435.0,387.1 L433.3,388.2 L431.0,388.3 L429.7,390.0 L428.4,391.7 L427.4,392.0 L425.7,391.2 L424.4,392.9 L423.1,394.6 L421.3,395.6 L419.0,395.7 L417.6,397.3 L416.2,398.9 L415.1,399.0 L413.6,398.1 L412.1,399.7 L410.4,401.1 L408.5,401.8 L406.2,401.3 L404.4,402.5 L402.5,403.6 L401.4,403.4 L400.2,402.1 L398.3,403.0 L396.4,404.0 L394.4,404.1 L392.3,403.2 L391.0,403.0 Z"/></clipPath>
 <g clip-path="url(#cpBR)" filter="url(#b05)">
  <rect x="385" y="285" width="110" height="125" fill="#9fcd6f"/>
  <ellipse cx="455" cy="345" rx="35" ry="14" fill="#afd682" filter="url(#b4)" transform="rotate(-42 455 345)"/>
  <ellipse cx="410" cy="370" rx="22" ry="8" fill="#88bb5c" filter="url(#b4)" transform="rotate(-55 410 370)"/>
  <ellipse cx="420" cy="398" rx="20" ry="6" fill="#8fc062" filter="url(#b2)" transform="rotate(-25 420 398)"/>
 </g>
 <path d="M394,400 C425,378 458,345 486,295" stroke="#b8da96" stroke-width="1" fill="none" filter="url(#b05)"/>
 
 <!-- left lower leaf -->
 <clipPath id="cpLL"><path d="M229.4,462.6 C229,452 230,442 234,434 C242,431 250,430 260.5,429.8 C275,430 288,430.5 299.5,430.6 C310,431 318,432 324.3,433.3 L333,434 L342.9,436.8 L336,442 L327.8,448.4 C322,454 316,459 310.1,464.3 C302,469 292,473 283.5,473.2 C276,471 270,467 265.8,464.3 C261,459 257,456 253.4,453.7 L248,452 L242.7,452.8 C238,455 233,459 229.4,462.6 Z"/></clipPath>
 <g clip-path="url(#cpLL)" filter="url(#b05)">
  <rect x="225" y="425" width="125" height="55" fill="#8fc262"/>
  <ellipse cx="282" cy="452" rx="34" ry="11" fill="#74a84c" filter="url(#b4)"/>
  <ellipse cx="243" cy="440" rx="12" ry="7" fill="#a8d47c" filter="url(#b2)"/>
  <ellipse cx="318" cy="437" rx="22" ry="5" fill="#a2ce76" filter="url(#b2)"/>
 </g>
 <path d="M250,451 C275,448 305,442 340,437" stroke="#a6d07c" stroke-width="1" fill="none" filter="url(#b05)"/>
 <!-- bottom left leaf -->
 <clipPath id="cpBL"><path d="M285,518 L286,505 L288,495 L295,488 L302,482 L310,478 L316,481 L322,485 L330,492 L336,497 L341,502 C340,508 338,514 336,520 L285,520 Z"/></clipPath>
 <g clip-path="url(#cpBL)" filter="url(#b05)">
  <rect x="280" y="475" width="65" height="50" fill="#8cbd5f"/>
  <ellipse cx="314" cy="506" rx="18" ry="10" fill="#73a44c" filter="url(#b4)"/>
  <ellipse cx="300" cy="488" rx="10" ry="5" fill="#a2cc76" filter="url(#b2)"/>
 </g>
 <!-- bottom right leaf -->
 <clipPath id="cpBRL"><path d="M336,520 C340,514 345,510 349,509 L360,503 L373,499 L386,493 L400,487 L412,484 L424,483 L434,485 L441,488 L445,494 L446,502 L445,510 L445,520 Z"/></clipPath>
 <g clip-path="url(#cpBRL)" filter="url(#b05)">
  <rect x="330" y="480" width="120" height="45" fill="#88ba5c"/>
  <ellipse cx="395" cy="510" rx="40" ry="10" fill="#71a24a" filter="url(#b4)"/>
  <ellipse cx="425" cy="490" rx="18" ry="5" fill="#9ecb72" filter="url(#b2)"/>
 </g>
 <path d="M350,515 C380,505 410,498 440,494" stroke="#a8d27c" stroke-width="1" fill="none" filter="url(#b05)"/>
 <!-- bract -->
 <path d="M381,340 C384,334 392,333 396,338 C397,348 394,358 389,364 C384,360 380,350 381,340 Z" fill="#a9cc80" filter="url(#b1)"/>
 <!-- small right bud -->
 <g filter="url(#b05)">
  <path d="M390,330 C388,318 386,305 385,293 C390,302 395,312 400,324 Z" fill="#98bc74"/>
  <path d="M406,326 C410,312 414,300 418,290 C418,304 414,318 408,332 Z" fill="#90b46c"/>
  <path d="M392,326 C392,312 392,302 393,297 C396,306 399,316 400,328 Z" fill="#7c9e5a"/>
  <path d="M396,326 C398,310 399,298 400,290 C402,300 404,312 403,326 Z" fill="#6e904e"/>
  <path d="M401,326 C403,312 405,300 407,293 C408,304 408,316 405,328 Z" fill="#86aa62"/>
  <path d="M389,316 C392,318 404,318 408,315 C407,326 403,334 398,338 C393,334 390,326 389,316 Z" fill="#8cb068"/>
 </g>
 <path d="M397,332 C396,345 394,358 392,372" stroke="#a4c07c" stroke-width="5" fill="none" filter="url(#b05)"/>
 <!-- bud body -->
 <clipPath id="cpBud"><path d="M321,229 C322,222 327,217 334,214 C340,211 348,210 356,209 L359.5,208 C364,214 368,220 372,226 C377,233 381,240 382,246 C384,256 384.5,262 384,267 C384,275 384,283 383,289 C381,296 378,302 374,306 C370,308 366,309 362,308 C355,305 348,300 342,294 C336,287 332,280 329,272 C325,262 323,252 322,244 C321,238 321,234 321,229 Z"/></clipPath>
 <g clip-path="url(#cpBud)" filter="url(#b05)">
  <rect x="315" y="205" width="75" height="110" fill="#93a480"/>
  <path d="M356,222 C368,232 380,248 382,272 C382,290 376,300 368,304 C362,286 358,262 356,240 Z" fill="#7a8c66" filter="url(#b4)"/>
  <path d="M322,232 C322,252 327,268 338,282 C343,266 343,248 341,230 Z" fill="#bba59c" filter="url(#b4)"/>
  <ellipse cx="352" cy="294" rx="22" ry="11" fill="#a5bf8b" filter="url(#b4)" transform="rotate(25 352 294)"/>
  <path d="M321,229 C323,222 328,217 334,214 L338,212 L343,214 L350,210 L356,211 L359.5,208 L363,214 C364,222 358,230 348,232 C338,234 328,233 321,229 Z" fill="#a8808a" filter="url(#b2)"/>
  <path d="M333,218 L337,214 L341,217 L347,213 L353,215 C354,219 350,222 344,223 C339,223 335,222 333,218 Z" fill="#9a4862" filter="url(#b1)"/>
 </g>
 <!-- sepals -->
 <path d="M318,278 C330,285 343,294 358,304 L355,299 C344,290 332,283 318,278 Z" fill="#8eb06a" filter="url(#b05)"/>
 <path d="M398,249 C394,268 388,287 378,303 L382,300 C390,285 395,268 398,249 Z" fill="#8eb06a" filter="url(#b05)"/>
 <path d="M330,292 C340,298 350,304 360,308" stroke="#9cb878" stroke-width="2" fill="none" filter="url(#b05)"/>
</svg>

</div>
<div id="checker" class="abs"></div>
</body></html>
